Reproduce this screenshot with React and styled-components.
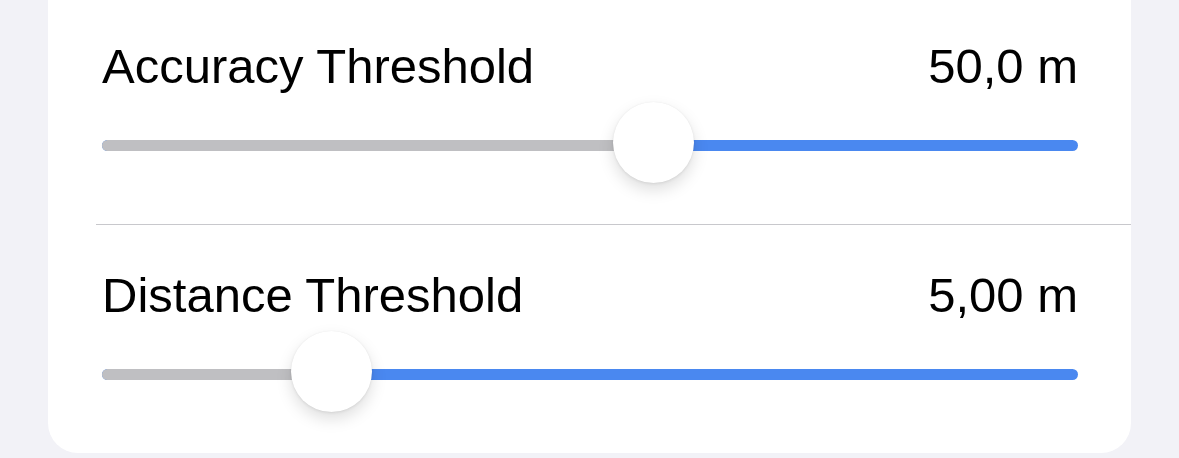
import React from "react";
import styled, { createGlobalStyle } from "styled-components";

const GlobalStyle = createGlobalStyle`
  html, body {
    margin: 0;
    padding: 0;
    background: #f2f2f7;
  }
  body {
    font-family: "Liberation Sans", Arial, sans-serif;
    -webkit-font-smoothing: antialiased;
  }
`;

const Page = styled.div`
  display: flex;
  flex-direction: column;
  padding: 0 48px 6px;
  background: #f2f2f7;
`;

const Card = styled.section`
  margin-top: -44px;
  padding-top: 40px;
  background: #ffffff;
  border-radius: 30px;
  overflow: hidden;
`;

const Row = styled.div`
  display: flex;
  flex-direction: column;
  padding: 41px 53px 41px 54px;
`;

const Header = styled.div`
  display: flex;
  justify-content: space-between;
  align-items: baseline;
  font-size: 49px;
  line-height: 58px;
  color: #000;
`;

const Label = styled.span``;

const Value = styled.span``;

const Divider = styled.hr`
  margin: 0 0 0 48px;
  border: none;
  height: 1px;
  background: #c8c8cc;
`;

const SliderBox = styled.div`
  position: relative;
  height: 81px;
  margin-top: 7px;
`;

const Track = styled.div`
  position: absolute;
  left: 0;
  right: 0;
  top: 38px;
  height: 11px;
  border-radius: 6px;
  background: #4a88f0;
  overflow: hidden;
`;

const Filled = styled.div`
  height: 100%;
  background: #bfbfc2;
`;

const Thumb = styled.div`
  position: absolute;
  top: 0;
  width: 81px;
  height: 81px;
  border-radius: 50%;
  background: #ffffff;
  box-shadow: 0 7px 16px rgba(0, 0, 0, 0.13), 0 1px 3px rgba(0, 0, 0, 0.08),
    0 0 1px rgba(0, 0, 0, 0.06);
`;

const Slider = ({ fraction }) => (
  <SliderBox>
    <Track>
      <Filled style={{ width: `calc((100% - 81px) * ${fraction} + 40.5px)` }} />
    </Track>
    <Thumb style={{ left: `calc((100% - 81px) * ${fraction})` }} />
  </SliderBox>
);

const settings = [
  { id: "accuracy", label: "Accuracy Threshold", value: "50,0 m", fraction: 0.5705 },
  { id: "distance", label: "Distance Threshold", value: "5,00 m", fraction: 0.2114 },
];

const App = () => (
  <>
    <GlobalStyle />
    <Page>
      <Card>
        {settings.map((s, i) => (
          <React.Fragment key={s.id}>
            {i > 0 && <Divider />}
            <Row>
              <Header>
                <Label>{s.label}</Label>
                <Value>{s.value}</Value>
              </Header>
              <Slider fraction={s.fraction} />
            </Row>
          </React.Fragment>
        ))}
      </Card>
    </Page>
  </>
);

export default App;
